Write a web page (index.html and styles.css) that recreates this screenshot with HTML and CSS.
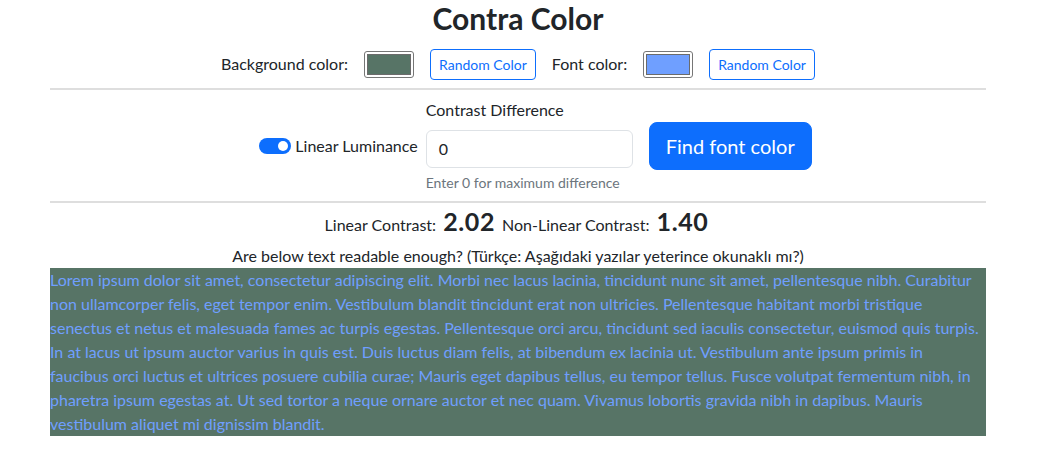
FILE: index.html
```html
<!DOCTYPE html>
<html lang="en">
<head>
<meta charset="utf-8">
<title>Contra Color</title>
<link rel="stylesheet" href="styles.css">
</head>
<body>
<div class="container">
  <h1 class="title">Contra Color</h1>
  <div class="color-row">
    <span class="label">Background color:</span>
    <span class="swatch"><span class="swatch-fill swatch-bg"></span></span>
    <button class="btn-outline">Random Color</button>
    <span class="label">Font color:</span>
    <span class="swatch"><span class="swatch-fill swatch-font"></span></span>
    <button class="btn-outline">Random Color</button>
  </div>
  <hr class="divider">
  <div class="control-row">
    <div class="switch-group">
      <span class="switch"><span class="knob"></span></span>
      <span class="switch-label">Linear Luminance</span>
    </div>
    <div class="field">
      <div class="field-label">Contrast Difference</div>
      <div class="input">0</div>
      <div class="help">Enter 0 for maximum difference</div>
    </div>
    <button class="btn-primary">Find font color</button>
  </div>
  <hr class="divider">
  <p class="contrast">Linear Contrast: <span class="num">2.02</span> Non-Linear Contrast: <span class="num">1.40</span></p>
  <p class="question">Are below text readable enough? (Türkçe: Aşağıdaki yazılar yeterince okunaklı mı?)</p>
  <p class="sample">Lorem ipsum dolor sit amet, consectetur adipiscing elit. Morbi nec lacus lacinia, tincidunt nunc sit amet, pellentesque nibh. Curabitur<br>non ullamcorper felis, eget tempor enim. Vestibulum blandit tincidunt erat non ultricies. Pellentesque habitant morbi tristique<br>senectus et netus et malesuada fames ac turpis egestas. Pellentesque orci arcu, tincidunt sed iaculis consectetur, euismod quis turpis.<br>In at lacus ut ipsum auctor varius in quis est. Duis luctus diam felis, at bibendum ex lacinia ut. Vestibulum ante ipsum primis in<br>faucibus orci luctus et ultrices posuere cubilia curae; Mauris eget dapibus tellus, eu tempor tellus. Fusce volutpat fermentum nibh, in<br>pharetra ipsum egestas at. Ut sed tortor a neque ornare auctor et nec quam. Vivamus lobortis gravida nibh in dapibus. Mauris<br>vestibulum aliquet mi dignissim blandit.</p>
</div>
</body>
</html>
```

FILE: styles.css
```css
* { box-sizing: border-box; }
body {
  margin: 0;
  font-family: Lato, "Noto Sans", sans-serif;
  font-size: 16px;
  line-height: 1.5;
  color: #212529;
  background: #fff;
}
.container {
  width: 936px;
  margin-left: 50px;
}
.title {
  margin: 0;
  font-size: 30px;
  font-weight: 700;
  line-height: 36px;
  text-align: center;
}
.color-row {
  display: flex;
  justify-content: center;
  align-items: center;
  gap: 16px;
  margin-top: 13px;
}
.label {
  position: relative;
  top: -1px;
}
.swatch {
  display: block;
  width: 50px;
  height: 27px;
  border: 1px solid #767676;
  border-radius: 3px;
  padding: 2px;
  background: #fff;
}
.swatch-fill {
  display: block;
  width: 100%;
  height: 100%;
  border: 1px solid #6b6b6b;
}
.swatch-bg { background: #577466; }
.swatch-font { background: #6f9fff; }
.btn-outline {
  font-family: inherit;
  font-size: 14px;
  line-height: 21px;
  padding: 4px 8px;
  color: #0d6efd;
  background: #fff;
  border: 1px solid #0d6efd;
  border-radius: 4px;
}
.divider {
  margin: 8px 0 0;
  border: 0;
  border-top: 2px solid #dedede;
}
.control-row {
  display: flex;
  justify-content: center;
  align-items: center;
  padding-left: 35px;
  margin-top: 8px;
}
.switch-group {
  display: flex;
  align-items: center;
  gap: 4px;
  margin-right: 8px;
}
.switch {
  position: relative;
  display: block;
  width: 32px;
  height: 16px;
  border-radius: 8px;
  background: #0d6efd;
}
.knob {
  position: absolute;
  right: 3px;
  top: 3px;
  width: 10px;
  height: 10px;
  border-radius: 50%;
  background: #fff;
}
.field {
  width: 207px;
  margin-right: 16px;
}
.field-label {
  margin-bottom: 8px;
}
.input {
  height: 38px;
  padding: 6px 12px;
  border: 1px solid #dee2e6;
  border-radius: 6px;
}
.help {
  margin-top: 4px;
  font-size: 14px;
  line-height: 21px;
  color: #6c757d;
}
.btn-primary {
  font-family: inherit;
  font-size: 20px;
  line-height: 30px;
  padding: 8px 16px;
  color: #fff;
  background: #0d6efd;
  border: 1px solid #0d6efd;
  border-radius: 8px;
}
.contrast {
  margin: 3px 0 0;
  text-align: center;
  line-height: 30px;
}
.num {
  font-size: 25px;
  font-weight: 700;
  letter-spacing: 0.6px;
  margin: 0 3px;
}
.question {
  margin: 4px 0 0;
  text-align: center;
  line-height: 24px;
}
.sample {
  margin: 0;
  background: #577466;
  color: #6f9fff;
  line-height: 24px;
}
```
